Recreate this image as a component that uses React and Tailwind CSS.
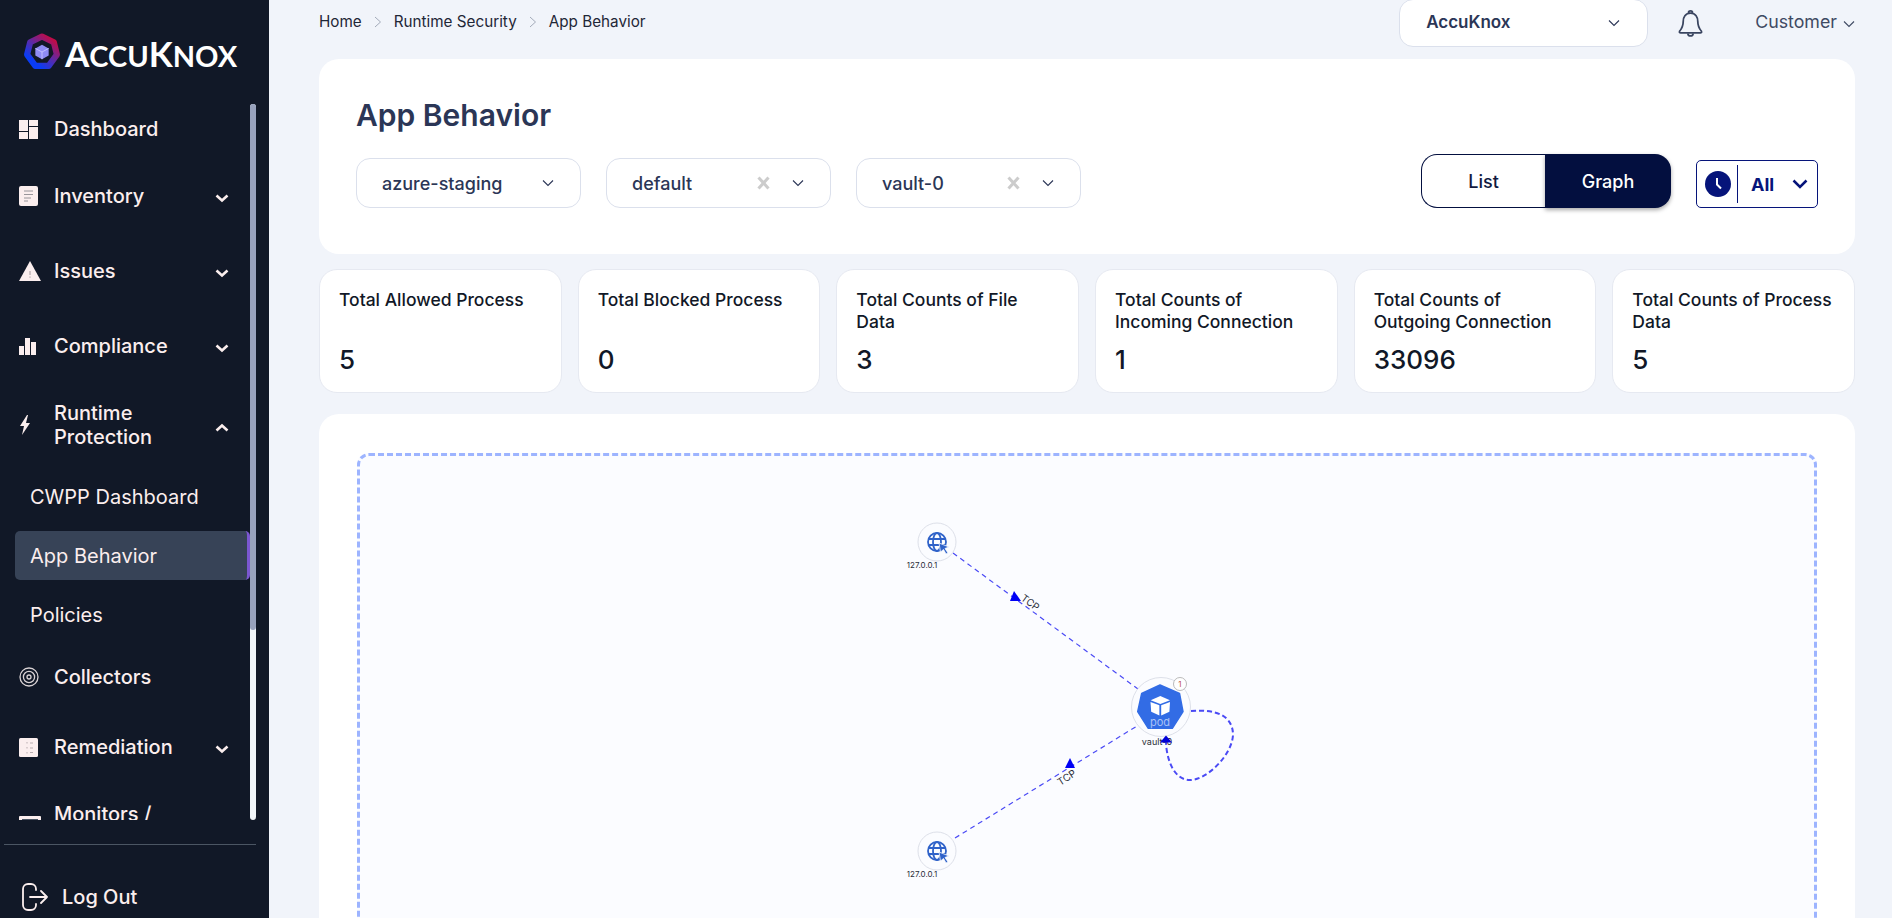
import React from 'react'

const INK = '#fbeeee'

function Chevron({ up = false, className = '' }) {
  return (
    <svg width="14" height="10" viewBox="0 0 14 10" fill="none" className={`shrink-0 ${className}`}>
      <path d={up ? 'M1.5 7.5 7 2.5l5.5 5' : 'M1.5 2.5 7 7.5l5.5-5'} stroke={INK} strokeWidth="2.6" />
    </svg>
  )
}

function ThinChevron({ color = '#2b3656', className = '' }) {
  return (
    <svg width="12" height="8" viewBox="0 0 12 8" fill="none" className={`shrink-0 ${className}`}>
      <path d="M1 1.5 6 6.5l5-5" stroke={color} strokeWidth="1.1" />
    </svg>
  )
}

const icons = {
  dashboard: (
    <svg width="19" height="19" viewBox="0 0 19 19" fill={INK}>
      <rect x="0" y="0" width="9" height="11" />
      <rect x="10" y="0" width="9" height="6" />
      <rect x="0" y="12" width="9" height="7" />
      <rect x="10" y="7" width="9" height="12" />
    </svg>
  ),
  inventory: (
    <svg width="19" height="20" viewBox="0 0 19 20">
      <rect width="19" height="20" rx="2" fill={INK} />
      <path d="M5 5h9M5 8.5h9M5 12h7M5 15h4" stroke="#8d8a90" strokeWidth="0.9" />
    </svg>
  ),
  issues: (
    <svg width="22" height="20" viewBox="0 0 22 20">
      <path d="M11 0 22 20H0Z" fill={INK} />
      <path d="M11 10v4M11 15.5v1.2" stroke="#9a8f92" strokeWidth="0.9" />
    </svg>
  ),
  compliance: (
    <svg width="17" height="17" viewBox="0 0 17 17" fill={INK}>
      <rect x="0" y="8" width="5" height="9" />
      <rect x="6" y="0" width="5" height="17" />
      <rect x="12" y="4" width="5" height="13" />
    </svg>
  ),
  runtime: (
    <svg width="12" height="20" viewBox="0 0 12 20" fill={INK}>
      <path d="M8 0 1 11h4L3 20 11 8H7l2-8Z" />
    </svg>
  ),
  collectors: (
    <svg width="20" height="20" viewBox="0 0 20 20" fill="none" stroke="#d9d2d4">
      <circle cx="10" cy="10" r="9" strokeWidth="1.3" />
      <circle cx="10" cy="10" r="5.6" strokeWidth="1.3" />
      <circle cx="10" cy="10" r="2" strokeWidth="1.3" />
    </svg>
  ),
  remediation: (
    <svg width="19" height="19" viewBox="0 0 19 19">
      <rect width="19" height="19" rx="1.5" fill={INK} />
      <path d="M8 4v1.5M8 9v1.5M8 14v1.5M11 5h3M11 10h3M11 14.5h3" stroke="#b9adb0" strokeWidth="1" />
    </svg>
  ),
  monitors: (
    <svg width="22" height="20" viewBox="0 0 22 20" fill="none">
      <rect x="0" y="0" width="22" height="18" rx="1" fill={INK} />
      <rect x="3" y="3" width="16" height="12" fill="#4b5563" />
    </svg>
  ),
}

const NAV_ITEMS = [
  { label: 'Dashboard', icon: 'dashboard', box: 'h-[50px] mt-0' },
  { label: 'Inventory', icon: 'inventory', box: 'h-[50px] mt-[17px]', chevron: 'down' },
  { label: 'Issues', icon: 'issues', box: 'h-[50px] mt-[25px]', chevron: 'down' },
  { label: 'Compliance', icon: 'compliance', box: 'h-[50px] mt-[25px]', chevron: 'down' },
  { label: 'Runtime Protection', icon: 'runtime', box: 'h-[50px] mt-[29px]', chevron: 'up' },
]

const SUB_ITEMS = [
  { label: 'CWPP Dashboard' },
  { label: 'App Behavior', active: true },
  { label: 'Policies' },
]

const STATS = [
  { title: 'Total Allowed Process', value: '5' },
  { title: 'Total Blocked Process', value: '0' },
  { title: 'Total Counts of File Data', value: '3' },
  { title: 'Total Counts of Incoming Connection', value: '1' },
  { title: 'Total Counts of Outgoing Connection', value: '33096' },
  { title: 'Total Counts of Process Data', value: '5' },
]

function NavRow({ item }) {
  return (
    <div className={`flex items-center pl-[19px] pr-[21px] shrink-0 ${item.box}`}>
      <span className="w-[35px] shrink-0 flex items-center">{icons[item.icon]}</span>
      <span className="flex-1 min-w-0 text-[20px] leading-6 font-medium text-[#fbeeee] pr-[50px]">{item.label}</span>
      {item.chevron && <Chevron up={item.chevron === 'up'} className={item.chevron === 'up' ? 'mt-[6px]' : 'mt-[3px]'} />}
    </div>
  )
}

function Sidebar() {
  return (
    <aside className="w-[269px] shrink-0 h-full bg-[#111827] flex flex-col relative">
      <div className="h-[104px] shrink-0 flex items-start pl-[23px] pt-[33px]">
        <svg width="38" height="38" viewBox="0 0 37 37" fill="none">
          <defs>
            <linearGradient id="logoRing" x1="30" y1="2" x2="6" y2="32" gradientUnits="userSpaceOnUse">
              <stop offset="0" stopColor="#d9042f" />
              <stop offset="0.5" stopColor="#5b2aa8" />
              <stop offset="0.85" stopColor="#0a3cf5" />
            </linearGradient>
          </defs>
          <path d="M18.5 3.500 30 9l3 12-8 11H12L4 21 7 9Z" stroke="url(#logoRing)" strokeWidth="6" strokeLinejoin="round" />
          <path d="M18.5 11.500 25 15v7l-6.500 3.500L12 22v-7Z" fill="#8f8cf5" />
          <path d="M12 15l6.500 3.500L25 15M18.500 18.500v7" stroke="#c9c8ff" strokeWidth="0.8" />
        </svg>
        <span className="ml-[4px] mt-[5px] text-white font-bold leading-[30px] font-['Lato',sans-serif]">
          <span className="text-[35px]">A</span>
          <span className="text-[29px]">CCU</span>
          <span className="text-[35px]">K</span>
          <span className="text-[29px]">NOX</span>
        </span>
      </div>

      <div className="h-[716px] shrink-0 relative overflow-hidden">
        <div className="flex flex-col pr-[19px]">
          {NAV_ITEMS.map((item) => (
            <NavRow key={item.label} item={item} />
          ))}
          <div className="flex flex-col mt-[22px] gap-[10px] shrink-0">
            {SUB_ITEMS.map((sub) => (
              <div
                key={sub.label}
                className={`ml-[15px] h-[49px] flex items-center pl-[15px] text-[20px] rounded-[5px] ${
                  sub.active
                    ? 'bg-[#374357] text-[#fbeeee] border-r-[3px] border-[#7b57d1]'
                    : 'text-[#fbeeee]'
                }`}
              >
                {sub.label}
              </div>
            ))}
          </div>
          <div className="mt-[13px]">
            <NavRow item={{ label: 'Collectors', icon: 'collectors', box: 'h-[50px] mt-0' }} />
          </div>
          <NavRow item={{ label: 'Remediation', icon: 'remediation', box: 'h-[50px] mt-[20px]', chevron: 'down' }} />
          <NavRow item={{ label: 'Monitors / Alerts', icon: 'monitors', box: 'h-[50px] mt-[29px]', chevron: 'down' }} />
        </div>
        <div className="absolute top-0 right-[13px] w-[6px] h-full rounded-full bg-[#f1f5f9]">
          <div className="h-[526px] rounded-full bg-[#98a2bd]" />
        </div>
      </div>

      <div className="mt-[24px] ml-[4px] mr-[13px] border-t border-[#4b5563]" />
      <div className="flex items-center pl-[22px] mt-[37px]">
        <svg width="26" height="28" viewBox="0 0 26 28" fill="none" stroke={INK} strokeWidth="1.8" strokeLinecap="round" strokeLinejoin="round">
          <path d="M14 7V6a5 5 0 0 0-5-5H6a5 5 0 0 0-5 5v16a5 5 0 0 0 5 5h3a5 5 0 0 0 5-5v-1" />
          <path d="M8 14h17M19 8l6 6-6 6" />
        </svg>
        <span className="ml-[14px] text-[20px] font-medium text-[#fbeeee]">Log Out</span>
      </div>
    </aside>
  )
}

function SelectBox({ value, clearable }) {
  return (
    <div className="w-[225px] h-[50px] rounded-[14px] border border-[#dbe0ec] bg-white flex items-center pl-[25px] pr-[26px]">
      <span className="flex-1 text-[18px] font-medium text-[#2b3656]">{value}</span>
      {clearable && (
        <svg width="13" height="14" viewBox="0 0 13 14" fill="none" className="mr-[22px]">
          <path d="M1.500 1.500 11.500 12.500M11.500 1.500 1.500 12.500" stroke="#cccccc" strokeWidth="3" />
        </svg>
      )}
      <ThinChevron />
    </div>
  )
}

function Graph() {
  const line = { stroke: '#4a4af5', strokeWidth: 1.2, strokeDasharray: '5 4', fill: 'none' }
  const nodeRing = { fill: '#fbfcff', stroke: '#dde0e9', strokeWidth: 1 }
  const globe = (cx, cy) => (
    <g>
      <circle cx={cx} cy={cy} r="19" {...nodeRing} />
      <g stroke="#2f62c9" strokeWidth="1.8" fill="none">
        <circle cx={cx} cy={cy} r="9" />
        <ellipse cx={cx} cy={cy} rx="4" ry="9" />
        <path d={`M${cx - 9} ${cy - 3}h18M${cx - 9} ${cy + 3}h18`} />
      </g>
      <path d={`M${cx + 2} ${cy + 1}l10 4-4 1.500 3 4.500-2 1-2.500-4.500-3 2.500Z`} fill="#2f62c9" stroke="#fbfcff" strokeWidth="0.8" />
    </g>
  )
  return (
    <svg
      className="absolute -left-[3px] -top-[3px]"
      width="1461"
      height="640"
      viewBox="357 453 1461 640"
    >
      <path d="M953 553 1138 689" {...line} />
      <path d="M955 838 1137 726" {...line} />
      <path d="M1191 711C1215 709 1233 715 1233 735C1232 755 1207 780 1190 780C1172 780 1166 755 1166 741" {...line} strokeWidth="2" strokeDasharray="5 3" />

      <path d="M1010 601 1014 591 1021 601Z" fill="#0000f5" />
      <path d="M1065 768 1070 758 1075 768Z" fill="#0000f5" />

      <text x="1030" y="606" fontSize="10" fill="#2a2e38" textAnchor="middle" transform="rotate(36 1030 603)" fontFamily="Inter, sans-serif">TCP</text>
      <text x="1067" y="781" fontSize="10" fill="#2a2e38" textAnchor="middle" transform="rotate(-33 1067 778)" fontFamily="Inter, sans-serif">TCP</text>

      {globe(937, 542)}
      {globe(937, 851)}
      <text x="922" y="568" fontSize="8" fill="#2a2e38" textAnchor="middle" fontFamily="Inter, sans-serif">127.0.0.1</text>
      <text x="922" y="877" fontSize="8" fill="#2a2e38" textAnchor="middle" fontFamily="Inter, sans-serif">127.0.0.1</text>

      <circle cx="1161" cy="707" r="29.500" {...nodeRing} />
      <path d="M1160 685 1179.500 693.500 1183 711.700 1172.300 728.300 1148.300 728.300 1137.700 711.700 1141.700 693.500Z" fill="#326ce5" stroke="#326ce5" strokeWidth="1.500" strokeLinejoin="round" />
      <path d="M1160.300 696 1170 700.200 1160.300 704 1150.700 700.200Z" fill="#fff" />
      <path d="M1150.500 702 1159.400 705.300 1159.400 715.500 1151.200 711.700Z" fill="#fff" />
      <path d="M1170 702 1161.200 705.300 1161.200 715.500 1169.400 711.700Z" fill="#fff" />
      <text x="1160" y="726" fontSize="11" fill="#a9c1f5" textAnchor="middle" fontFamily="Inter, sans-serif">pod</text>
      <circle cx="1180" cy="684" r="6.500" fill="#fff" stroke="#a8a8a8" strokeWidth="0.8" />
      <text x="1180" y="687" fontSize="8" fill="#c0504d" textAnchor="middle" fontFamily="Inter, sans-serif">1</text>
      <text x="1157" y="744.500" fontSize="9" fill="#2a2e38" textAnchor="middle" fontFamily="Inter, sans-serif">vault-0</text>
      <path d="M1160 742.500 1166 735.500 1172 742.500Z" fill="#0000d8" />
    </svg>
  )
}

export default function App() {
  return (
    <div className="flex h-screen overflow-hidden bg-[#f1f4fa] font-['Inter',sans-serif]">
      <Sidebar />
      <main className="flex-1 min-w-0 pl-[50px] pr-[37px]">
        <header className="h-[59px] flex items-start">
          <nav className="flex items-center h-[44px] text-[15.250px] text-[#1f2737]">
            <span>Home</span>
            <svg width="8" height="12" viewBox="0 0 8 12" fill="none" className="mx-[12px]">
              <path d="M1 1l5.500 5L1 11" stroke="#9aa1b1" strokeWidth="0.9" />
            </svg>
            <span>Runtime Security</span>
            <svg width="8" height="12" viewBox="0 0 8 12" fill="none" className="mx-[12px]">
              <path d="M1 1l5.500 5L1 11" stroke="#9aa1b1" strokeWidth="0.9" />
            </svg>
            <span>App Behavior</span>
          </nav>
          <div className="ml-auto flex items-center">
            <div className="w-[249px] h-[48px] -mt-px bg-white border border-[#dbe0ec] rounded-[14px] flex items-center pl-[26px] pr-[27px]">
              <span className="flex-1 text-[17px] font-semibold text-[#2b3656]">AccuKnox</span>
              <ThinChevron />
            </div>
            <svg width="25" height="30" viewBox="0 0 24 28" fill="none" stroke="#3a4560" strokeWidth="1.700" className="ml-[30px]">
              <path d="M10 3.500a2 2 0 0 1 4 0M12 3.500c-5 0-7 4-7 8 0 5-1.500 7-3.500 9.500-.5 1 .2 1.500 1 1.500h19c.8 0 1.500-.5 1-1.500C20.500 18.500 19 16.500 19 11.500c0-4-2-8-7-8Z" />
              <path d="M9.500 23a2.500 2.500 0 0 0 5 0" />
            </svg>
            <span className="ml-[52px] -mt-[2px] text-[17.800px] text-[#3f4a63]">Customer</span>
            <ThinChevron color="#3f4a63" className="ml-[6px]" />
          </div>
        </header>

        <section className="h-[195px] rounded-[20px] bg-white px-[37px] pt-[38px]">
          <h1 className="text-[30px] leading-9 font-semibold text-[#2b3656]">App Behavior</h1>
          <div className="flex items-end justify-between mt-[21px]">
            <div className="flex gap-[25px]">
              <SelectBox value="azure-staging" />
              <SelectBox value="default" clearable />
              <SelectBox value="vault-0" clearable />
            </div>
            <div className="flex items-end gap-[25px]">
              <div className="flex w-[250px] h-[54px]">
                <span className="w-[124px] flex items-center justify-center rounded-l-[16px] border border-r-0 border-[#030f3f] text-[18px] font-medium text-[#111a3f] bg-white">List</span>
                <span className="flex-1 flex items-center justify-center rounded-r-[16px] text-[18px] font-medium text-white bg-[#030f3f] shadow-[0_2px_4px_rgba(0,0,0,0.35)]">Graph</span>
              </div>
              <div className="w-[122px] h-[48px] rounded-[5px] border border-[#06147a] flex items-center pl-[8px]">
                <svg width="26" height="26" viewBox="0 0 26 26" className="shrink-0">
                  <circle cx="13" cy="13" r="13" fill="#06147a" />
                  <path d="M12 7v6.500l4 4" stroke="#fff" strokeWidth="2" fill="none" />
                </svg>
                <span className="ml-[6px] w-px h-[38px] bg-[#06147a]" />
                <span className="ml-[13px] text-[18px] font-bold text-[#06147a]">All</span>
                <svg width="16" height="10" viewBox="0 0 16 10" fill="none" className="ml-[18px]">
                  <path d="M1.500 1.500 8 8l6.500-6.500" stroke="#06147a" strokeWidth="2.500" />
                </svg>
              </div>
            </div>
          </div>
        </section>

        <section className="grid grid-cols-6 gap-[16px] mt-[15px]">
          {STATS.map((stat) => (
            <div key={stat.title} className="h-[124px] rounded-[18px] bg-white border border-[#e6e9f1] pl-[19px] pr-[20px] pt-[19px] pb-[16px] flex flex-col justify-between">
              <p className="text-[17.500px] leading-[22px] font-medium text-[#111827]">{stat.title}</p>
              <p className="text-[26px] leading-8 font-medium text-[#111827]">{stat.value}</p>
            </div>
          ))}
        </section>

        <section className="h-[640px] mt-[21px] rounded-[20px] bg-white px-[38px] pt-[39px]">
          <div className="relative h-[580px] rounded-[12px] border-[3px] border-dashed border-[#9db4ff] bg-[#fbfcff] overflow-hidden">
            <Graph />
          </div>
        </section>
      </main>
    </div>
  )
}
